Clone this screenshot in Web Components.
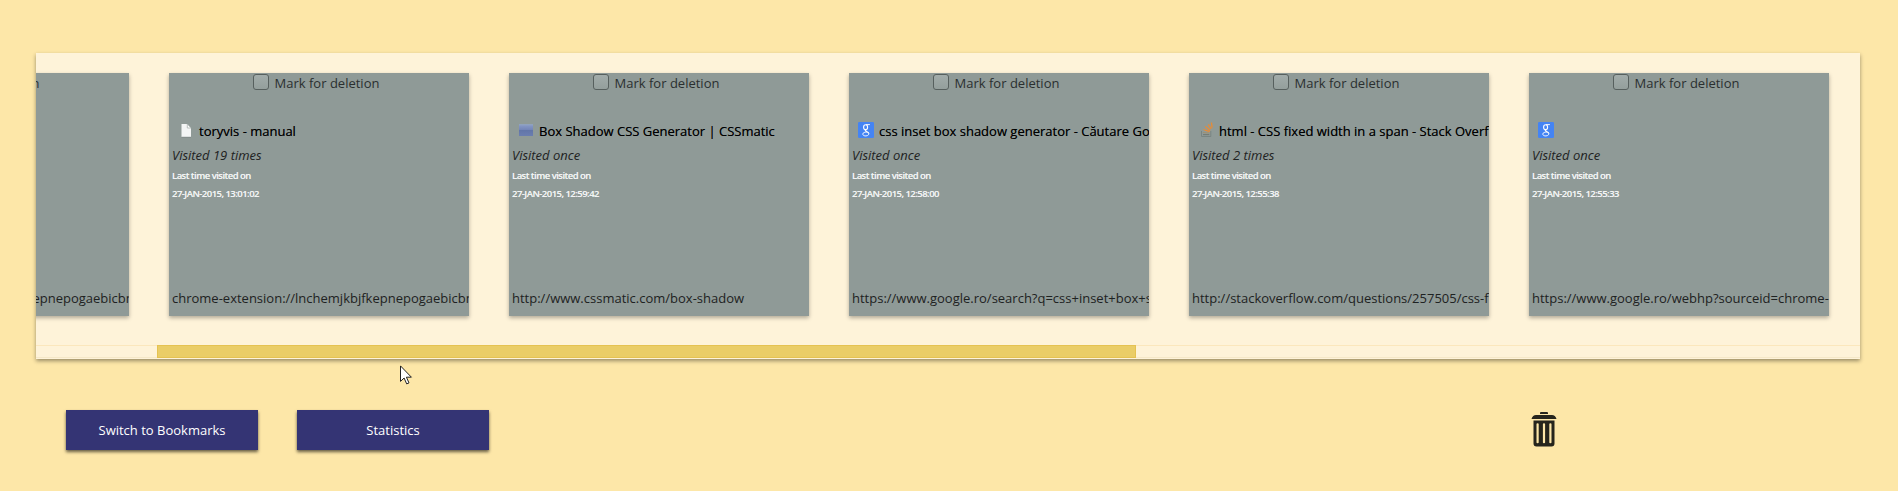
<!DOCTYPE html>
<html lang="en">
<head>
<meta charset="utf-8">
<title>History</title>
<style>
body{margin:0;background:#fde7a8;font-family:"Open Sans",sans-serif;height:491px;overflow:hidden}
</style>
</head>
<body>
<history-app></history-app>
<script>
const icons = {
  page:`<svg width="16" height="16" viewBox="0 0 16 16"><path d="M3.500 2h5.500l4 4v9h-9.500z" fill="#f3f5f5"/><path d="M9.300 2v4h3.700z" fill="#fff" stroke="#a9b3b0" stroke-width=".8"/><path d="M3.500 15.200h9.500" stroke="#75807d" stroke-width=".6"/></svg>`,
  box:`<svg width="16" height="16" viewBox="0 0 16 16"><defs><linearGradient id="g" x2="0" y2="1"><stop offset="0" stop-color="#8a9cc6"/><stop offset=".45" stop-color="#7385b8"/><stop offset=".47" stop-color="#6175a8"/><stop offset="1" stop-color="#6b7eb0"/></linearGradient></defs><path d="M1 2.500h14v11.500h-14z" fill="url(#g)"/><path d="M1 2.800h14" stroke="#92a5c4" stroke-width="1"/></svg>`,
  google:`<svg width="16" height="16" viewBox="0 0 16 16"><rect width="16" height="16" rx="1.300" fill="#4484f4"/><g fill="none" stroke="#fff"><ellipse cx="7.600" cy="5.200" rx="2" ry="2.400" stroke-width="1.100"/><path d="M8 2.600h3.900" stroke-width=".9"/><path d="M8.300 7.800c-1.600.6-1 1.200.4 1.800 1.300.5 2.100 1 2.100 2.100" stroke-width="1.200"/><path d="M10.900 11.600c0 3.100-6.300 3-6.100.4.100-1.500 2-1.900 4-1.900" stroke-width=".9"/></g></svg>`,
  stack:`<svg width="16" height="16" viewBox="0 0 16 16"><path d="M3.500 9v5.500h9.300v-5.500" fill="none" stroke="#798582" stroke-width="1"/><path d="M5 12.600h6.300" stroke="#747b74" stroke-width="1.100"/><path d="M5 10.500l6.300.5" stroke="#a0906f" stroke-width="1.100"/><path d="M5.500 7.500l6 2.200M7.200 4.600l4.900 3.800M10.300 2.300l3 4.600M13.400.5l.8 5" stroke="#e98b34" stroke-width="1.300"/></svg>`
};
const define = (name, html, setup) => customElements.define(name, class extends HTMLElement {
  constructor(){
    super();
    const t = document.createElement('template');
    t.innerHTML = html;
    this.attachShadow({mode:'open'}).append(t.content.cloneNode(true));
  }
  connectedCallback(){ if (setup) setup(this, this.shadowRoot); }
});

customElements.define('site-icon', class extends HTMLElement {
  static observedAttributes = ['name'];
  constructor(){
    super();
    this.attachShadow({mode:'open'});
  }
  attributeChangedCallback(){
    this.shadowRoot.innerHTML = '<style>:host{display:block;width:16px;height:16px}svg{display:block}</style>' + (icons[this.getAttribute('name')] || '');
  }
});

define('mark-check', `<style>
:host{display:flex;justify-content:center;height:20px;padding-right:6px;font-size:13px;line-height:20px;color:#2a2f2f}
i{box-sizing:border-box;width:16px;height:16px;margin:1px 6px 0 0;border:1px solid #57605e;border-radius:3px;background:linear-gradient(#a2acaa,#949f9c)}
</style><i></i><span>Mark for deletion</span>`);

define('history-card', `<style>
:host{display:flex;flex-direction:column;flex:none;box-sizing:border-box;width:300px;height:243px;background:#8f9a97;box-shadow:0 2px 4px rgba(0,0,0,.3);overflow:hidden;white-space:nowrap;font-size:13px;color:#1e2222}
.title{display:flex;height:20px;line-height:20px;margin:28px 0 0 9px;color:#000;text-shadow:0 0 .5px rgba(0,0,0,.6)}
site-icon{margin:1px 5px 0 0;flex:none}
.visits{margin:5px 0 0 3px;line-height:18px;font-style:italic}
.last{margin:3px 0 0 3px;font-size:9.500px;letter-spacing:-.53px;font-weight:600;line-height:18px;color:#f2f4f4;text-shadow:0 0 .5px rgba(242,244,244,.6)}
.url{margin:auto 0 9px 3px;line-height:18px}
</style>
<mark-check></mark-check>
<div class="title"><site-icon></site-icon><span><slot></slot></span></div>
<div class="visits"></div>
<div class="last"><div>Last time visited on</div><div class="date"></div></div>
<div class="url"></div>`, (el, root) => {
  root.querySelector('site-icon').setAttribute('name', el.getAttribute('icon'));
  for (const k of ['visits','date','url']) root.querySelector('.'+k).textContent = el.getAttribute(k);
});

define('scroll-track', `<style>
:host{display:block;box-sizing:border-box;height:13px;border-top:1px solid #fbe7bd;border-bottom:1px solid #f5e8c8;padding-left:121px}
div{box-sizing:border-box;width:979px;height:13px;margin-top:-1px;background:#eacd67;border:1px solid #e5c251}
</style><div></div>`);

define('history-panel', `<style>
:host{display:flex;flex-direction:column;justify-content:space-between;box-sizing:border-box;width:1824px;height:306px;margin:53px 0 0 36px;padding:0 0 1px;background:#fef3d9;box-shadow:0 2px 4px rgba(0,0,0,.4)}
.view{overflow:hidden;height:275px;display:flex;align-items:flex-start;padding-top:20px;box-sizing:border-box}
.row{display:flex;gap:40px;margin-left:-207px;flex:none}
</style><div class="view"><div class="row"><slot></slot></div></div><scroll-track></scroll-track>`);

define('action-button', `<style>
:host{display:block;width:192px;height:40px;line-height:40px;text-align:center;background:#343474;color:#fff;font-size:13px;box-shadow:0 2px 3px rgba(0,0,0,.6)}
</style><slot></slot>`);

define('trash-icon', `<style>:host{display:block;width:26px;height:35px}svg{display:block}</style>
<svg width="26" height="35" viewBox="0 0 26 35"><path fill="#26251c" fill-rule="evenodd" d="M9 1q0-1 1-1h6q1 0 1 1v1h-8zM5 3h16q3.300 0 4.500 4h-25q1.200-4 4.500-4zM2.500 8.500h21v23q0 3-3 3h-15q-3 0-3-3zM5.500 12q0-.8 1.100-.8t1.100.8v18.500q0 .8-1.100.8t-1.100-.8zM11.900 12q0-.8 1.100-.8t1.100.8v18.500q0 .8-1.100.8t-1.100-.8zM18.300 12q0-.8 1.100-.8t1.100.8v18.500q0 .8-1.100.8t-1.100-.8z"/></svg>`);

define('mouse-pointer', `<style>:host{display:block;position:absolute;left:400px;top:365px}svg{display:block}</style>
<svg width="13" height="20" viewBox="0 0 13 20"><path d="M.5.900v15.500l3.600-3.400 2.600 5.900 2.300-1-2.600-5.700h5z" fill="#fff" stroke="#222"/></svg>`);

define('history-app', `<style>
:host{display:flow-root;position:relative;width:1898px;height:491px}
footer{display:flex;align-items:flex-start;padding:51px 0 0 66px}
action-button{margin-right:39px}
trash-icon{margin:2px 0 0 1003px}
</style>
<history-panel>
<history-card icon="page" visits="Visited 19 times" date="27-JAN-2015, 13:01:02" url="chrome-extension://lnchemjkbjfkepnepogaebicbmpbjfhc/manual.html"></history-card>
<history-card icon="page" visits="Visited 19 times" date="27-JAN-2015, 13:01:02" url="chrome-extension://lnchemjkbjfkepnepogaebicbmpbjfhc/manual.html">toryvis - manual</history-card>
<history-card icon="box" visits="Visited once" date="27-JAN-2015, 12:59:42" url="http://www.cssmatic.com/box-shadow">Box Shadow CSS Generator | CSSmatic</history-card>
<history-card icon="google" visits="Visited once" date="27-JAN-2015, 12:58:00" url="https://www.google.ro/search?q=css+inset+box+s">css inset box shadow generator - Căutare Google</history-card>
<history-card icon="stack" visits="Visited 2 times" date="27-JAN-2015, 12:55:38" url="http://stackoverflow.com/questions/257505/css-f">html - CSS fixed width in a span - Stack Overflow</history-card>
<history-card icon="google" visits="Visited once" date="27-JAN-2015, 12:55:33" url="https://www.google.ro/webhp?sourceid=chrome-"></history-card>
</history-panel>
<footer><action-button>Switch to Bookmarks</action-button><action-button>Statistics</action-button><trash-icon></trash-icon></footer>
<mouse-pointer></mouse-pointer>`);
</script>
</body>
</html>
